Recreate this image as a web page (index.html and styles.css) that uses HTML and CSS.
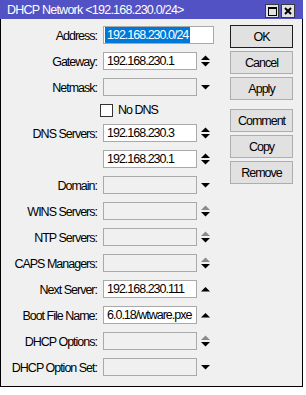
FILE: index.html
```html
<!DOCTYPE html>
<html lang="en">
<head>
    <meta charset="UTF-8">
    <meta name="viewport" content="width=device-width, initial-scale=1.0">
    <title>DHCP Network</title>
    <link rel="stylesheet" href="styles.css">
</head>
<body>
    <div class="window">
        <div class="titlebar">
            <span class="title">DHCP Network &lt;192.168.230.0/24&gt;</span>
            <div class="title-btns">
                <span class="tbtn">
                    <svg width="9" height="9" viewBox="0 0 9 9"><rect x="0.5" y="0.5" width="8" height="8" fill="none" stroke="#000"/><rect x="0" y="0" width="9" height="2" fill="#000"/></svg>
                </span>
                <span class="tbtn">
                    <svg width="8" height="8" viewBox="0 0 8 8"><path d="M1 1 7 7M7 1 1 7" stroke="#000" stroke-width="2"/></svg>
                </span>
            </div>
        </div>

        <div class="content">
            <div class="form">
                <div class="row">
                    <label class="lbl">Address:</label>
                    <div class="field on wide"><span class="val sel">192.168.230.0/24</span></div>
                </div>
                <div class="row">
                    <label class="lbl">Gateway:</label>
                    <div class="field on"><span class="val">192.168.230.1</span></div>
                    <svg class="arrow" width="9" height="12" viewBox="0 0 9 12"><path d="M0 5 4.5 0.5 9 5Z"/><path d="M0 7h9l-4.5 4.5Z"/></svg>
                </div>
                <div class="row">
                    <label class="lbl">Netmask:</label>
                    <div class="field"></div>
                    <svg class="arrow" width="9" height="5" viewBox="0 0 9 5"><path d="M0 0h9L4.5 4.5Z"/></svg>
                </div>
                <div class="check-row">
                    <span class="check"></span>
                    <span>No DNS</span>
                </div>
                <div class="row">
                    <label class="lbl">DNS Servers:</label>
                    <div class="field on"><span class="val">192.168.230.3</span></div>
                    <svg class="arrow" width="9" height="12" viewBox="0 0 9 12"><path d="M0 5 4.5 0.5 9 5Z"/><path d="M0 7h9l-4.5 4.5Z"/></svg>
                </div>
                <div class="row">
                    <label class="lbl"></label>
                    <div class="field on"><span class="val">192.168.230.1</span></div>
                    <svg class="arrow" width="9" height="12" viewBox="0 0 9 12"><path d="M0 5 4.5 0.5 9 5Z"/><path d="M0 7h9l-4.5 4.5Z"/></svg>
                </div>
                <div class="row">
                    <label class="lbl">Domain:</label>
                    <div class="field"></div>
                    <svg class="arrow" width="9" height="5" viewBox="0 0 9 5"><path d="M0 0h9L4.5 4.5Z"/></svg>
                </div>
                <div class="row">
                    <label class="lbl">WINS Servers:</label>
                    <div class="field"></div>
                    <svg class="arrow" width="9" height="12" viewBox="0 0 9 12"><path class="dim" d="M0 5 4.5 0.5 9 5Z"/><path d="M0 7h9l-4.5 4.5Z"/></svg>
                </div>
                <div class="row">
                    <label class="lbl">NTP Servers:</label>
                    <div class="field"></div>
                    <svg class="arrow" width="9" height="12" viewBox="0 0 9 12"><path class="dim" d="M0 5 4.5 0.5 9 5Z"/><path d="M0 7h9l-4.5 4.5Z"/></svg>
                </div>
                <div class="row">
                    <label class="lbl">CAPS Managers:</label>
                    <div class="field"></div>
                    <svg class="arrow" width="9" height="12" viewBox="0 0 9 12"><path class="dim" d="M0 5 4.5 0.5 9 5Z"/><path d="M0 7h9l-4.5 4.5Z"/></svg>
                </div>
                <div class="row">
                    <label class="lbl">Next Server:</label>
                    <div class="field on"><span class="val">192.168.230.111</span></div>
                    <svg class="arrow" width="9" height="5" viewBox="0 0 9 5"><path d="M0 4.5 4.5 0 9 4.5Z"/></svg>
                </div>
                <div class="row">
                    <label class="lbl">Boot File Name:</label>
                    <div class="field on"><span class="val">6.0.18/wtware.pxe</span></div>
                    <svg class="arrow" width="9" height="5" viewBox="0 0 9 5"><path d="M0 4.5 4.5 0 9 4.5Z"/></svg>
                </div>
                <div class="row">
                    <label class="lbl">DHCP Options:</label>
                    <div class="field"></div>
                    <svg class="arrow" width="9" height="12" viewBox="0 0 9 12"><path class="dim" d="M0 5 4.5 0.5 9 5Z"/><path d="M0 7h9l-4.5 4.5Z"/></svg>
                </div>
                <div class="row">
                    <label class="lbl">DHCP Option Set:</label>
                    <div class="field"></div>
                    <svg class="arrow" width="9" height="5" viewBox="0 0 9 5"><path d="M0 0h9L4.5 4.5Z"/></svg>
                </div>
            </div>

            <div class="buttons">
                <button type="button" class="btn default">OK</button>
                <button type="button" class="btn">Cancel</button>
                <button type="button" class="btn">Apply</button>
                <button type="button" class="btn gap">Comment</button>
                <button type="button" class="btn">Copy</button>
                <button type="button" class="btn">Remove</button>
            </div>
        </div>
    </div>
</body>
</html>
```

FILE: styles.css
```css
body {
    margin: 0;
    background-color: #ffffff;
    font-family: "Liberation Sans", Arial, sans-serif;
    font-size: 12.5px;
    letter-spacing: -1px;
    color: #000000;
}
.window {
    width: 303px;
    height: 387px;
    box-sizing: border-box;
    background-color: #f0f0f0;
    border: 1px solid #000000;
    border-top: none;
}
.titlebar {
    height: 19px;
    margin: 0 -1px;
    padding-left: 7px;
    background-color: #5252c4;
    color: #ffffff;
    display: flex;
    align-items: flex-start;
    letter-spacing: -0.75px;
}
.title {
    padding-top: 2px;
    line-height: 16px;
}
.title-btns {
    margin-left: auto;
    display: flex;
    gap: 2px;
    padding: 4px 8px 0 0;
}
.tbtn {
    width: 14px;
    height: 14px;
    box-sizing: border-box;
    border: 1px solid #3a3a3a;
    background-color: #e2e2e2;
    display: flex;
    align-items: center;
    justify-content: center;
}
.content {
    display: flex;
    padding-top: 3px;
}
.form {
    width: 229px;
}
.row {
    height: 26px;
    display: flex;
    align-items: center;
}
.lbl {
    width: 96px;
    margin-right: 6px;
    text-align: right;
    white-space: nowrap;
    padding-top: 1px;
}
.field {
    width: 94px;
    height: 18px;
    box-sizing: border-box;
    border: 1px solid #a9a9a9;
    background-color: #f0f0f0;
    padding-left: 1px;
    line-height: 16px;
    overflow: hidden;
    white-space: nowrap;
}
.field.on {
    background-color: #ffffff;
}
.field.wide {
    width: 111px;
}
.val {
    display: inline-block;
    padding: 0 2px;
}
.val.sel {
    background-color: #0078d7;
    color: #ffffff;
}
.arrow {
    margin-left: 4px;
    fill: #000000;
}
.arrow .dim {
    fill: #8a8a8a;
}
.check-row {
    height: 20px;
    display: flex;
    align-items: center;
    padding-left: 99px;
}
.check {
    width: 13px;
    height: 13px;
    box-sizing: border-box;
    border: 1px solid #333333;
    background-color: #ffffff;
    margin-right: 5px;
}
.buttons {
    width: 63px;
    display: flex;
    flex-direction: column;
    gap: 3px;
    padding-top: 3px;
}
.btn {
    height: 23px;
    box-sizing: border-box;
    padding: 0;
    border: 1px solid #adadad;
    background-color: #e1e1e1;
    color: #000000;
    font: inherit;
    letter-spacing: inherit;
}
.btn.default {
    border-color: #1e1e1e;
}
.btn.gap {
    margin-top: 6px;
}
```
